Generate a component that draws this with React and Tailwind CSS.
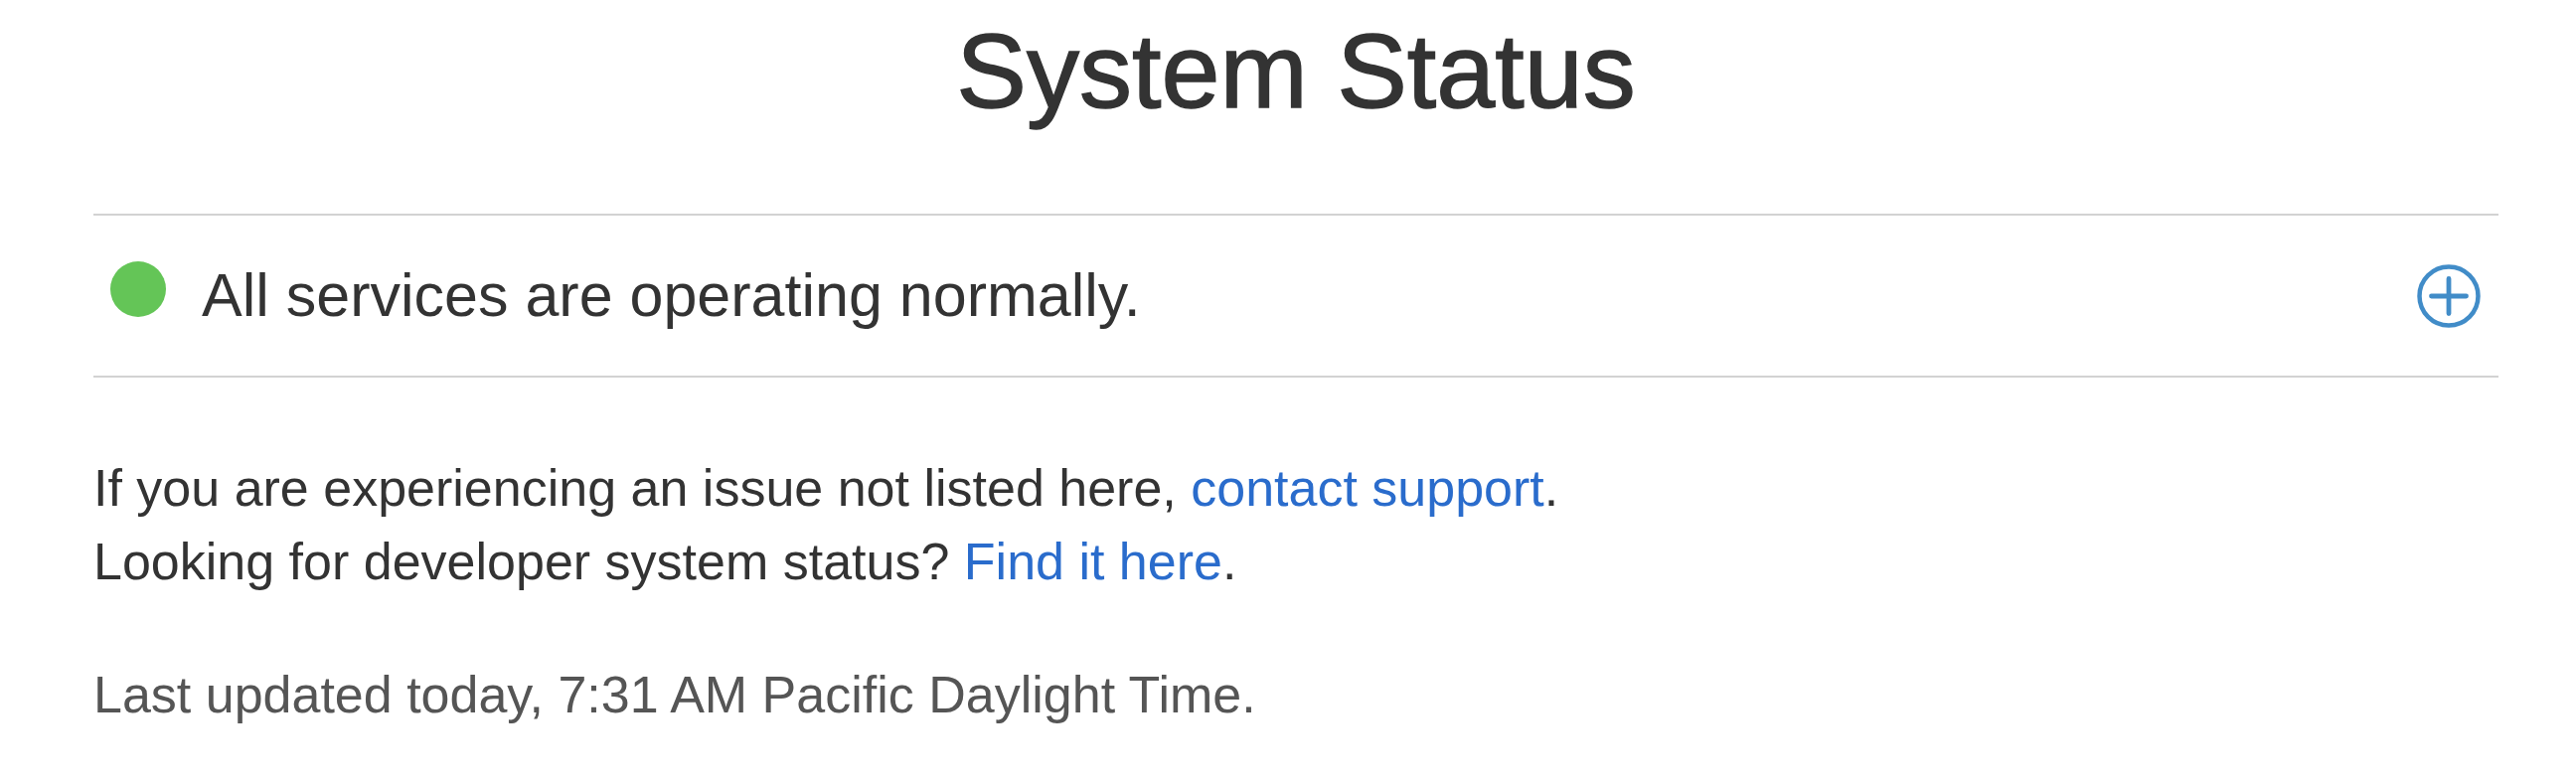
import React from 'react';

const PlusCircleIcon = () => (
    <svg width="64" height="64" viewBox="0 0 64 64" fill="none" aria-hidden="true">
        <circle cx="32" cy="32" r="29.5" stroke="#418cc8" strokeWidth="4.5" />
        <path d="M32 14.5v35M14.5 32h35" stroke="#418cc8" strokeWidth="4.8" strokeLinecap="round" />
    </svg>
);

const App = () => {
    return (
        <div className="min-h-screen bg-white font-['Liberation_Sans',Arial,sans-serif] text-[#333333]">
            <main className="ml-[94px] w-[2420px] pt-[18px]">
                <h1 className="text-center text-[106px] font-normal leading-none text-[#333333] [-webkit-text-stroke:1.4px_#333333]">
                    System Status
                </h1>

                <section className="mt-[91px] border-y-2 border-[#d2d2d2]">
                    <div className="flex h-[161px] items-center justify-between pl-[17px] pr-[18px]">
                        <div className="flex items-center gap-[36px]">
                            <span className="mb-[14px] h-[56px] w-[56px] rounded-full bg-[#64c557]" />
                            <p className="text-[61px] leading-none">All services are operating normally.</p>
                        </div>
                        <button type="button" aria-label="Show all services" className="flex">
                            <PlusCircleIcon />
                        </button>
                    </div>
                </section>

                <section className="mt-[74px] text-[52px] leading-[74px]">
                    <p>
                        If you are experiencing an issue not listed here,{' '}
                        <a href="#" className="text-[#2a6ccc]">contact support</a>.
                    </p>
                    <p>
                        Looking for developer system status?{' '}
                        <a href="#" className="text-[#2a6ccc]">Find it here</a>.
                    </p>
                    <p className="mt-[60px] text-[#555555]">Last updated today, 7:31 AM Pacific Daylight Time.</p>
                </section>
            </main>
        </div>
    );
};

export default App;
